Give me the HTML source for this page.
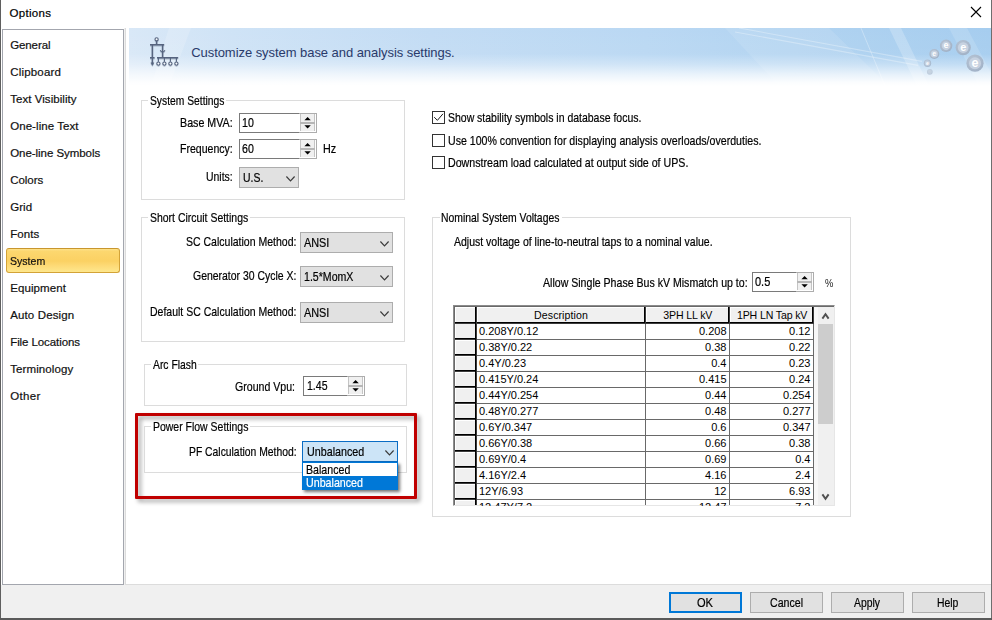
<!DOCTYPE html>
<html><head><meta charset="utf-8"><title>Options</title>
<style>
*{box-sizing:border-box;margin:0;padding:0}
html,body{width:992px;height:620px;overflow:hidden;background:#fff}
body{position:relative;font-family:"Liberation Sans",sans-serif;font-size:12px;color:#000}
.a{position:absolute}
.t{position:absolute;white-space:pre;transform-origin:0 50%;-webkit-text-stroke:0.2px currentColor}
.n{-webkit-text-stroke:0}
.g{position:absolute;border:1px solid #dcdcdc}
.in{position:absolute;background:#fff;border:1px solid #7a7a7a}
.cm{position:absolute;background:#e1e1e1;border:1px solid #adadad}
.bt{position:absolute;top:592px;width:73px;height:21px;background:#e1e1e1;border:1px solid #adadad}
.cb{position:absolute;width:13px;height:13px;border:1px solid #333;background:#fff}
.sp{position:absolute;background:#fff;border:1px solid #adadad;border-left:0}
.sb{position:absolute;left:1px;width:15px;background:#f0f0f0;border-left:1px solid #c4c4c4;border-right:1px solid #c4c4c4}
svg{position:absolute;overflow:visible}
</style></head><body>
<div class="a" style="left:0px;top:0px;width:1px;height:620px;background:#5f5f5f"></div>
<div class="a" style="left:991px;top:0px;width:1px;height:620px;background:#6e6e6e"></div>
<div class="a" style="left:1px;top:585px;width:990px;height:33px;background:#f0f0f0"></div>
<div class="a" style="left:0px;top:618px;width:992px;height:2px;background:#5a5a5a"></div>
<svg style="left:971px;top:7px" width="10" height="10" viewBox="0 0 10 10"><path d="M0 0L10 10M10 0L0 10" stroke="#000" stroke-width="1.1" fill="none"/></svg>
<div class="a" style="left:2px;top:29px;width:122px;height:556px;background:#fff;border:1px solid #a3a6ae"></div>
<div class="a" style="left:124px;top:28px;width:1px;height:557px;background:#f0f0f0"></div>
<div class="a" style="left:125px;top:28px;width:1px;height:557px;background:#dcdcdc"></div>
<div class="a" style="left:125px;top:584px;width:866px;height:1px;background:#dcdcdc"></div>
<div class="a" style="left:6px;top:248px;width:114px;height:25px;border:1px solid #d3a337;border-top-color:#c8962e;border-radius:3px;background:linear-gradient(#fee28a 0,#fcd76f 10%,#fbd163 52%,#fdda76 72%,#fee78d 100%)"></div>
<div class="a" style="left:129px;top:28px;width:862px;height:58px;overflow:hidden;background:linear-gradient(90deg,#d9e8f7 0,#cfe3f6 12%,#c3dcf4 35%,#bad8f3 60%,#add1f0 85%,#a6cdef 100%)">
<svg style="left:0;top:0" width="862" height="58" viewBox="0 0 862 58">
<polygon points="596,0 700,0 760,58 650,58" fill="#fff" opacity=".10"/>
<path d="M610 0L793 33.4M606 4L789 37.4" stroke="#fff" stroke-width="1.1" opacity=".3" fill="none"/>
<polygon points="760,0 772,0 800,58 788,58" fill="#fff" opacity=".22"/>
<path d="M732 0L756 58" stroke="#fff" stroke-width="1" opacity=".3"/>
<polygon points="820,0 838,0 862,45 862,58 850,58" fill="#fff" opacity=".14"/>
<polygon points="40,0 62,0 40,58 22,58" fill="#fff" opacity=".18"/>
</svg>
<div class="a" style="left:0;top:0;width:862px;height:58px;background:linear-gradient(rgba(255,255,255,0) 0,rgba(255,255,255,.04) 45%,rgba(255,255,255,.3) 62%,rgba(255,255,255,.7) 80%,rgba(255,255,255,.95) 94%,#fff 100%)"></div>
<svg style="left:0;top:0" width="862" height="58" viewBox="0 0 862 58" font-family="Liberation Sans, sans-serif" font-weight="bold" fill="#fff" text-anchor="middle">
<defs><radialGradient id="bg" cx=".4" cy=".35" r=".7"><stop offset="0" stop-color="#b9c6d6"/><stop offset=".7" stop-color="#a9b8cb"/><stop offset="1" stop-color="#9fb0c6"/></radialGradient></defs>
<g stroke="none">
<circle cx="846" cy="35.2" r="8.6" fill="url(#bg)" opacity="1"/>
<circle cx="846" cy="35.2" r="6.02" fill="#c9d4e2" opacity="0.90"/>
<circle cx="834.2" cy="19.6" r="7.6" fill="url(#bg)" opacity="1"/>
<circle cx="834.2" cy="19.6" r="5.32" fill="#c9d4e2" opacity="0.90"/>
<circle cx="817.1" cy="17.8" r="6.2" fill="url(#bg)" opacity="1"/>
<circle cx="817.1" cy="17.8" r="4.34" fill="#c9d4e2" opacity="0.90"/>
<circle cx="805.3" cy="26" r="5" fill="url(#bg)" opacity="1"/>
<circle cx="805.3" cy="26" r="3.50" fill="#c9d4e2" opacity="0.90"/>
<circle cx="798.5" cy="35.2" r="3.7" fill="url(#bg)" opacity="0.85"/>
<circle cx="798.5" cy="35.2" r="2.59" fill="#c9d4e2" opacity="0.77"/>
<circle cx="800.8" cy="43.8" r="2.9" fill="url(#bg)" opacity="0.6"/>
<circle cx="800.8" cy="43.8" r="2.03" fill="#c9d4e2" opacity="0.54"/>
</g>
<text x="846" y="38.6" font-size="12.5" stroke="none">e</text>
<text x="834.2" y="22.6" font-size="11" stroke="none">e</text>
<text x="817.1" y="20.2" font-size="9" stroke="none">e</text>
<text x="805.3" y="27.9" font-size="7" stroke="none">e</text>
<text x="798.5" y="36.6" font-size="5" stroke="none">e</text>
</svg>
<svg style="left:20px;top:8px;filter:drop-shadow(0.5px 1px 0.6px rgba(70,85,115,.35))" width="32" height="32" viewBox="149 36 32 32" fill="none" stroke="#56647f" stroke-width="1.5">
<path d="M156.6 41V44.7M150 44.7H164.2M152.4 44.7V63M162.6 44.7V57.7M150 57.7H154.6M157 57.7H178.2"/>
<circle cx="156.6" cy="39.3" r="1.6" fill="#f4f8fc" stroke-width="1.1"/>
<path d="M152.4 65.4L150.9 62.8H153.9Z" fill="#56647f" stroke-width=".5"/>
<path d="M160.2 50.2Q162.6 53.8 165 50.2" stroke-width="1.1"/>
<path d="M158.4 57.7V61.8M164.4 57.7V61.8M170.4 57.7V61.8M176.4 57.7V61.8" stroke-width="1.1"/>
<g stroke-width="1.1" fill="#f4f8fc"><circle cx="158.4" cy="63.6" r="1.6"/><circle cx="164.4" cy="63.6" r="1.6"/><circle cx="170.4" cy="63.6" r="1.6"/><circle cx="176.4" cy="63.6" r="1.6"/></g>
</svg>
</div>

<div class="bt" style="left:669px;border:2px solid #0078d7"></div>
<div class="bt" style="left:750px"></div>
<div class="bt" style="left:831px"></div>
<div class="bt" style="left:912px"></div>
<div class="g" style="left:141px;top:100px;width:264px;height:100px"></div>
<div class="a" style="left:148px;top:100px;width:78px;height:1px;background:#fff"></div>
<div class="in" style="left:239px;top:113px;width:61px;height:20px;border-right:0"></div>
<div class="sp" style="left:299px;top:113px;width:18px;height:20px"><div class="sb" style="top:0px;height:8px"></div><div class="a" style="left:1px;top:8px;width:15px;height:2px;background:#b6b6b6"></div><div class="sb" style="top:10px;height:7px"></div><svg style="left:0;top:0" width="18" height="18" viewBox="0 0 18 18"><path d="M5.4 6.2L8.6 3L11.8 6.2ZM5.4 11.2L8.6 14.4L11.8 11.2Z" fill="#000"/></svg></div>
<div class="in" style="left:239px;top:139px;width:61px;height:20px;border-right:0"></div>
<div class="sp" style="left:299px;top:139px;width:18px;height:20px"><div class="sb" style="top:0px;height:8px"></div><div class="a" style="left:1px;top:8px;width:15px;height:2px;background:#b6b6b6"></div><div class="sb" style="top:10px;height:7px"></div><svg style="left:0;top:0" width="18" height="18" viewBox="0 0 18 18"><path d="M5.4 6.2L8.6 3L11.8 6.2ZM5.4 11.2L8.6 14.4L11.8 11.2Z" fill="#000"/></svg></div>
<div class="cm" style="left:239px;top:167px;width:60px;height:21px;"><svg style="right:3.4px;top:7.6px" width="9" height="6" viewBox="0 0 9 6"><path d="M0.4 0.5L4.5 4.8L8.6 0.5" stroke="#3a3a3a" stroke-width="1.15" fill="none"/></svg></div>
<div class="g" style="left:141px;top:217px;width:264px;height:125px"></div>
<div class="a" style="left:148px;top:217px;width:101.80000000000001px;height:1px;background:#fff"></div>
<div class="cm" style="left:300px;top:232px;width:93px;height:21px;"><svg style="right:3.4px;top:7.6px" width="9" height="6" viewBox="0 0 9 6"><path d="M0.4 0.5L4.5 4.8L8.6 0.5" stroke="#3a3a3a" stroke-width="1.15" fill="none"/></svg></div>
<div class="cm" style="left:300px;top:266px;width:93px;height:21px;"><svg style="right:3.4px;top:7.6px" width="9" height="6" viewBox="0 0 9 6"><path d="M0.4 0.5L4.5 4.8L8.6 0.5" stroke="#3a3a3a" stroke-width="1.15" fill="none"/></svg></div>
<div class="cm" style="left:300px;top:302px;width:93px;height:21px;"><svg style="right:3.4px;top:7.6px" width="9" height="6" viewBox="0 0 9 6"><path d="M0.4 0.5L4.5 4.8L8.6 0.5" stroke="#3a3a3a" stroke-width="1.15" fill="none"/></svg></div>
<div class="g" style="left:144px;top:364px;width:263px;height:42px"></div>
<div class="a" style="left:151px;top:364px;width:47.30000000000001px;height:1px;background:#fff"></div>
<div class="in" style="left:303px;top:376px;width:45px;height:20px;border-right:0"></div>
<div class="sp" style="left:347px;top:376px;width:18px;height:20px"><div class="sb" style="top:0px;height:8px"></div><div class="a" style="left:1px;top:8px;width:15px;height:2px;background:#b6b6b6"></div><div class="sb" style="top:10px;height:7px"></div><svg style="left:0;top:0" width="18" height="18" viewBox="0 0 18 18"><path d="M5.4 6.2L8.6 3L11.8 6.2ZM5.4 11.2L8.6 14.4L11.8 11.2Z" fill="#000"/></svg></div>
<div class="a" style="left:135px;top:413px;width:282px;height:86px;border:3px solid #c00000;border-radius:1px;filter:drop-shadow(3px 3px 2px rgba(0,0,0,.36))"></div>
<div class="g" style="left:144px;top:426px;width:263px;height:47px"></div>
<div class="a" style="left:151px;top:426px;width:99px;height:1px;background:#fff"></div>
<div class="cm" style="left:302px;top:441px;width:96px;height:21px;background:#cce4f7;border-color:#0a6cc4"><svg style="right:3.4px;top:7.6px" width="9" height="6" viewBox="0 0 9 6"><path d="M0.4 0.5L4.5 4.8L8.6 0.5" stroke="#3a3a3a" stroke-width="1.15" fill="none"/></svg></div>
<div class="a" style="left:302px;top:462px;width:96px;height:28px;background:#fff;border:1px solid #0078d7;box-shadow:2px 2px 3px rgba(0,0,0,.55)"><div class="a" style="left:0;top:13px;width:94px;height:13px;background:#0078d7"></div></div>
<div class="cb" style="left:432px;top:111px"><svg style="left:1px;top:1px" width="9" height="9" viewBox="0 0 9 9"><path d="M0.2 4.2L3.4 7.3L9 0.8" stroke="#1a1a1a" stroke-width="1" fill="none"/></svg></div>
<div class="cb" style="left:432px;top:134px"></div>
<div class="cb" style="left:432px;top:156px"></div>
<div class="g" style="left:432px;top:217px;width:419px;height:300px"></div>
<div class="a" style="left:439.5px;top:217px;width:122.0px;height:1px;background:#fff"></div>
<div class="in" style="left:752px;top:272px;width:45px;height:20px;border-right:0"></div>
<div class="sp" style="left:796px;top:272px;width:18px;height:20px"><div class="sb" style="top:0px;height:8px"></div><div class="a" style="left:1px;top:8px;width:15px;height:2px;background:#b6b6b6"></div><div class="sb" style="top:10px;height:7px"></div><svg style="left:0;top:0" width="18" height="18" viewBox="0 0 18 18"><path d="M5.4 6.2L8.6 3L11.8 6.2ZM5.4 11.2L8.6 14.4L11.8 11.2Z" fill="#000"/></svg></div>
<div class="a" style="left:453px;top:305px;width:382px;height:201px;background:#fff;overflow:hidden;border-top:1px solid #8c8c8c;border-left:1px solid #8c8c8c;border-right:1px solid #e6e6e6;border-bottom:1px solid #e6e6e6"><div class="a" style="left:0;top:0;width:381px;height:1px;background:#696969"></div><div class="a" style="left:0;top:0;width:1px;height:200px;background:#696969"></div><div class="a" style="left:2px;top:2px;width:357px;height:14px;background:#f0f0f0"></div><div class="a" style="left:2px;top:2px;width:19px;height:198px;background:#f0f0f0"></div><div class="a" style="left:1px;top:16px;width:359px;height:1px;background:#000"></div><div class="a" style="left:1px;top:17px;width:359px;height:1px;background:#3c3c3c"></div><div class="a" style="left:21px;top:1px;width:1px;height:16px;background:#000"></div><div class="a" style="left:22px;top:1px;width:1px;height:16px;background:#3c3c3c"></div><div class="a" style="left:23px;top:1px;width:1px;height:15px;background:#fff"></div><div class="a" style="left:190px;top:1px;width:1px;height:16px;background:#000"></div><div class="a" style="left:191px;top:1px;width:1px;height:16px;background:#3c3c3c"></div><div class="a" style="left:192px;top:1px;width:1px;height:15px;background:#fff"></div><div class="a" style="left:274px;top:1px;width:1px;height:16px;background:#000"></div><div class="a" style="left:275px;top:1px;width:1px;height:16px;background:#3c3c3c"></div><div class="a" style="left:276px;top:1px;width:1px;height:15px;background:#fff"></div><div class="a" style="left:358px;top:1px;width:1px;height:16px;background:#000"></div><div class="a" style="left:359px;top:1px;width:1px;height:16px;background:#3c3c3c"></div><div class="a" style="left:360px;top:1px;width:1px;height:15px;background:#fff"></div><div class="a" style="left:21px;top:16px;width:1px;height:184px;background:#000"></div><div class="a" style="left:22px;top:16px;width:1px;height:184px;background:#3c3c3c"></div><div class="a" style="left:23px;top:33px;width:337px;height:1px;background:#696969"></div><div class="a" style="left:1px;top:32px;width:20px;height:1px;background:#000"></div><div class="a" style="left:1px;top:33px;width:20px;height:1px;background:#3c3c3c"></div><div class="a" style="left:1px;top:34px;width:20px;height:1px;background:#fff"></div><div class="a" style="left:23px;top:49px;width:337px;height:1px;background:#696969"></div><div class="a" style="left:1px;top:48px;width:20px;height:1px;background:#000"></div><div class="a" style="left:1px;top:49px;width:20px;height:1px;background:#3c3c3c"></div><div class="a" style="left:1px;top:50px;width:20px;height:1px;background:#fff"></div><div class="a" style="left:23px;top:65px;width:337px;height:1px;background:#696969"></div><div class="a" style="left:1px;top:64px;width:20px;height:1px;background:#000"></div><div class="a" style="left:1px;top:65px;width:20px;height:1px;background:#3c3c3c"></div><div class="a" style="left:1px;top:66px;width:20px;height:1px;background:#fff"></div><div class="a" style="left:23px;top:81px;width:337px;height:1px;background:#696969"></div><div class="a" style="left:1px;top:80px;width:20px;height:1px;background:#000"></div><div class="a" style="left:1px;top:81px;width:20px;height:1px;background:#3c3c3c"></div><div class="a" style="left:1px;top:82px;width:20px;height:1px;background:#fff"></div><div class="a" style="left:23px;top:97px;width:337px;height:1px;background:#696969"></div><div class="a" style="left:1px;top:96px;width:20px;height:1px;background:#000"></div><div class="a" style="left:1px;top:97px;width:20px;height:1px;background:#3c3c3c"></div><div class="a" style="left:1px;top:98px;width:20px;height:1px;background:#fff"></div><div class="a" style="left:23px;top:113px;width:337px;height:1px;background:#696969"></div><div class="a" style="left:1px;top:112px;width:20px;height:1px;background:#000"></div><div class="a" style="left:1px;top:113px;width:20px;height:1px;background:#3c3c3c"></div><div class="a" style="left:1px;top:114px;width:20px;height:1px;background:#fff"></div><div class="a" style="left:23px;top:129px;width:337px;height:1px;background:#696969"></div><div class="a" style="left:1px;top:128px;width:20px;height:1px;background:#000"></div><div class="a" style="left:1px;top:129px;width:20px;height:1px;background:#3c3c3c"></div><div class="a" style="left:1px;top:130px;width:20px;height:1px;background:#fff"></div><div class="a" style="left:23px;top:145px;width:337px;height:1px;background:#696969"></div><div class="a" style="left:1px;top:144px;width:20px;height:1px;background:#000"></div><div class="a" style="left:1px;top:145px;width:20px;height:1px;background:#3c3c3c"></div><div class="a" style="left:1px;top:146px;width:20px;height:1px;background:#fff"></div><div class="a" style="left:23px;top:161px;width:337px;height:1px;background:#696969"></div><div class="a" style="left:1px;top:160px;width:20px;height:1px;background:#000"></div><div class="a" style="left:1px;top:161px;width:20px;height:1px;background:#3c3c3c"></div><div class="a" style="left:1px;top:162px;width:20px;height:1px;background:#fff"></div><div class="a" style="left:23px;top:177px;width:337px;height:1px;background:#696969"></div><div class="a" style="left:1px;top:176px;width:20px;height:1px;background:#000"></div><div class="a" style="left:1px;top:177px;width:20px;height:1px;background:#3c3c3c"></div><div class="a" style="left:1px;top:178px;width:20px;height:1px;background:#fff"></div><div class="a" style="left:23px;top:193px;width:337px;height:1px;background:#696969"></div><div class="a" style="left:1px;top:192px;width:20px;height:1px;background:#000"></div><div class="a" style="left:1px;top:193px;width:20px;height:1px;background:#3c3c3c"></div><div class="a" style="left:1px;top:194px;width:20px;height:1px;background:#fff"></div><div class="a" style="left:191px;top:18px;width:1px;height:182px;background:#696969"></div><div class="a" style="left:275px;top:18px;width:1px;height:182px;background:#696969"></div><div class="a" style="left:359px;top:18px;width:1px;height:182px;background:#696969"></div><div class="a" style="left:360px;top:1px;width:4px;height:199px;background:#f7f7f7"></div><div class="a" style="left:364px;top:1px;width:16px;height:199px;background:#f0f0f0"></div><div class="a" style="left:364px;top:18px;width:15px;height:100px;background:#cdcdcd"></div><svg style="left:366px;top:6px" width="11" height="8" viewBox="820 312 11 8"><path d="M822.4 318.6L825.5 314.2L828.6 318.6" stroke="#505050" stroke-width="1.9" fill="none"/></svg><svg style="left:366px;top:187px" width="11" height="8" viewBox="820 493 11 8"><path d="M822.4 494.4L825.5 498.8L828.6 494.4" stroke="#505050" stroke-width="1.9" fill="none"/></svg></div>
<div class="t" style="left:9.4px;top:6.32px;font-size:11.5px;line-height:14px;letter-spacing:0.323px;">Options</div>
<div class="t" style="left:10.2px;top:37.62px;font-size:11.5px;line-height:14px;letter-spacing:-0.103px;color:#111;">General</div>
<div class="t" style="left:10.2px;top:64.62px;font-size:11.5px;line-height:14px;letter-spacing:0.185px;color:#111;">Clipboard</div>
<div class="t" style="left:10.2px;top:91.62px;font-size:11.5px;line-height:14px;letter-spacing:0.052px;color:#111;">Text Visibility</div>
<div class="t" style="left:10.2px;top:118.62px;font-size:11.5px;line-height:14px;letter-spacing:0.066px;color:#111;">One-line Text</div>
<div class="t" style="left:10.2px;top:145.62px;font-size:11.5px;line-height:14px;letter-spacing:-0.048px;color:#111;">One-line Symbols</div>
<div class="t" style="left:10.2px;top:172.62px;font-size:11.5px;line-height:14px;letter-spacing:-0.039px;color:#111;">Colors</div>
<div class="t" style="left:10.2px;top:199.62px;font-size:11.5px;line-height:14px;letter-spacing:0.041px;color:#111;">Grid</div>
<div class="t" style="left:10.2px;top:226.62px;font-size:11.5px;line-height:14px;letter-spacing:0.067px;color:#111;">Fonts</div>
<div class="t" style="left:10.2px;top:253.62px;font-size:11.5px;line-height:14px;transform:scaleX(0.9180);color:#111;">System</div>
<div class="t" style="left:10.2px;top:280.62px;font-size:11.5px;line-height:14px;letter-spacing:0.102px;color:#111;">Equipment</div>
<div class="t" style="left:10.2px;top:307.62px;font-size:11.5px;line-height:14px;letter-spacing:0.131px;color:#111;">Auto Design</div>
<div class="t" style="left:10.2px;top:334.62px;font-size:11.5px;line-height:14px;letter-spacing:-0.083px;color:#111;">File Locations</div>
<div class="t" style="left:10.2px;top:361.62px;font-size:11.5px;line-height:14px;letter-spacing:0.100px;color:#111;">Terminology</div>
<div class="t" style="left:10.2px;top:388.62px;font-size:11.5px;line-height:14px;letter-spacing:0.327px;color:#111;">Other</div>
<div class="t" style="left:191.2px;top:44.90px;font-size:13px;line-height:16px;letter-spacing:-0.055px;color:#2a3a6a;-webkit-text-stroke:0;">Customize system base and analysis settings.</div>
<div class="t" style="left:697.3px;top:594.67px;font-size:12.5px;line-height:16px;transform:scaleX(0.8858);">OK</div>
<div class="t" style="left:769.6px;top:594.67px;font-size:12.5px;line-height:16px;transform:scaleX(0.8504);">Cancel</div>
<div class="t" style="left:853.9px;top:594.67px;font-size:12.5px;line-height:16px;transform:scaleX(0.8312);">Apply</div>
<div class="t" style="left:937.1px;top:594.67px;font-size:12.5px;line-height:16px;transform:scaleX(0.8321);">Help</div>
<div class="t" style="left:149.9px;top:94.01px;font-size:12.1px;line-height:15px;transform:scaleX(0.8513);">System Settings</div>
<div class="t" style="left:180.4px;top:116.01px;font-size:12.1px;line-height:15px;transform:scaleX(0.8841);">Base MVA:</div>
<div class="t" style="left:242.3px;top:116.01px;font-size:12.1px;line-height:15px;transform:scaleX(0.8771);">10</div>
<div class="t" style="left:180.4px;top:141.61px;font-size:12.1px;line-height:15px;transform:scaleX(0.8711);">Frequency:</div>
<div class="t" style="left:242.3px;top:141.61px;font-size:12.1px;line-height:15px;transform:scaleX(0.8771);">60</div>
<div class="t" style="left:322.9px;top:141.61px;font-size:12.1px;line-height:15px;transform:scaleX(0.8930);">Hz</div>
<div class="t" style="left:206.4px;top:169.81px;font-size:12.1px;line-height:15px;transform:scaleX(0.8635);">Units:</div>
<div class="t" style="left:243.3px;top:171.21px;font-size:12.1px;line-height:15px;transform:scaleX(0.8627);">U.S.</div>
<div class="t" style="left:149.9px;top:211.01px;font-size:12.1px;line-height:15px;transform:scaleX(0.8645);">Short Circuit Settings</div>
<div class="t" style="left:185.9px;top:234.81px;font-size:12.1px;line-height:15px;transform:scaleX(0.8689);">SC Calculation Method:</div>
<div class="t" style="left:304.4px;top:236.21px;font-size:12.1px;line-height:15px;transform:scaleX(0.8996);">ANSI</div>
<div class="t" style="left:192.9px;top:268.81px;font-size:12.1px;line-height:15px;transform:scaleX(0.8641);">Generator 30 Cycle X:</div>
<div class="t" style="left:304.4px;top:270.21px;font-size:12.1px;line-height:15px;transform:scaleX(0.8748);">1.5*MomX</div>
<div class="t" style="left:149.9px;top:304.81px;font-size:12.1px;line-height:15px;transform:scaleX(0.8676);">Default SC Calculation Method:</div>
<div class="t" style="left:304.4px;top:306.21px;font-size:12.1px;line-height:15px;transform:scaleX(0.8996);">ANSI</div>
<div class="t" style="left:152.9px;top:358.01px;font-size:12.1px;line-height:15px;transform:scaleX(0.8556);">Arc Flash</div>
<div class="t" style="left:234.7px;top:379.91px;font-size:12.1px;line-height:15px;transform:scaleX(0.8749);">Ground Vpu:</div>
<div class="t" style="left:306.8px;top:379.11px;font-size:12.1px;line-height:15px;transform:scaleX(0.8706);">1.45</div>
<div class="t" style="left:152.9px;top:420.01px;font-size:12.1px;line-height:15px;transform:scaleX(0.8654);">Power Flow Settings</div>
<div class="t" style="left:189.3px;top:445.01px;font-size:12.1px;line-height:15px;transform:scaleX(0.8560);">PF Calculation Method:</div>
<div class="t" style="left:306.5px;top:445.11px;font-size:12.1px;line-height:15px;transform:scaleX(0.8875);">Unbalanced</div>
<div class="t" style="left:305.5px;top:462.71px;font-size:12.1px;line-height:15px;transform:scaleX(0.8783);">Balanced</div>
<div class="t" style="left:305.5px;top:476.11px;font-size:12.1px;line-height:15px;transform:scaleX(0.8829);color:#fff;">Unbalanced</div>
<div class="t" style="left:448.4px;top:111.31px;font-size:12.1px;line-height:15px;transform:scaleX(0.8665);">Show stability symbols in database focus.</div>
<div class="t" style="left:448.4px;top:134.31px;font-size:12.1px;line-height:15px;transform:scaleX(0.8763);">Use 100% convention for displaying analysis overloads/overduties.</div>
<div class="t" style="left:448.4px;top:156.31px;font-size:12.1px;line-height:15px;transform:scaleX(0.8808);">Downstream load calculated at output side of UPS.</div>
<div class="t" style="left:441.4px;top:211.01px;font-size:12.1px;line-height:15px;transform:scaleX(0.8592);">Nominal System Voltages</div>
<div class="t" style="left:453.6px;top:235.31px;font-size:12.1px;line-height:15px;transform:scaleX(0.8683);">Adjust voltage of line-to-neutral taps to a nominal value.</div>
<div class="t" style="left:542.9px;top:276.11px;font-size:12.1px;line-height:15px;transform:scaleX(0.8747);">Allow Single Phase Bus kV Mismatch up to:</div>
<div class="t" style="left:755.0px;top:275.31px;font-size:12.1px;line-height:15px;transform:scaleX(0.9100);">0.5</div>
<div class="t" style="left:825.2px;top:277.06px;font-size:10.5px;line-height:13px;transform:scaleX(0.8883);color:#222;-webkit-text-stroke:0;">%</div>
<div class="t" style="left:534.1px;top:309.13px;font-size:10.6px;line-height:13px;letter-spacing:0.073px;-webkit-text-stroke:0;">Description</div>
<div class="t" style="left:663.2px;top:309.13px;font-size:10.6px;line-height:13px;letter-spacing:-0.128px;-webkit-text-stroke:0;">3PH LL kV</div>
<div class="t" style="left:736.9px;top:309.13px;font-size:10.6px;line-height:13px;letter-spacing:-0.141px;-webkit-text-stroke:0;">1PH LN Tap kV</div>
<div class="t n" style="left:479.00px;top:324.19px;font-size:11px;line-height:14px;">0.208Y/0.12</div>
<div class="t n" style="left:698.97px;top:324.19px;font-size:11px;line-height:14px;">0.208</div>
<div class="t n" style="left:789.08px;top:324.19px;font-size:11px;line-height:14px;">0.12</div>
<div class="t n" style="left:479.00px;top:340.19px;font-size:11px;line-height:14px;">0.38Y/0.22</div>
<div class="t n" style="left:705.08px;top:340.19px;font-size:11px;line-height:14px;">0.38</div>
<div class="t n" style="left:789.08px;top:340.19px;font-size:11px;line-height:14px;">0.22</div>
<div class="t n" style="left:479.00px;top:356.19px;font-size:11px;line-height:14px;">0.4Y/0.23</div>
<div class="t n" style="left:711.20px;top:356.19px;font-size:11px;line-height:14px;">0.4</div>
<div class="t n" style="left:789.08px;top:356.19px;font-size:11px;line-height:14px;">0.23</div>
<div class="t n" style="left:479.00px;top:372.19px;font-size:11px;line-height:14px;">0.415Y/0.24</div>
<div class="t n" style="left:698.97px;top:372.19px;font-size:11px;line-height:14px;">0.415</div>
<div class="t n" style="left:789.08px;top:372.19px;font-size:11px;line-height:14px;">0.24</div>
<div class="t n" style="left:479.00px;top:388.19px;font-size:11px;line-height:14px;">0.44Y/0.254</div>
<div class="t n" style="left:705.08px;top:388.19px;font-size:11px;line-height:14px;">0.44</div>
<div class="t n" style="left:782.97px;top:388.19px;font-size:11px;line-height:14px;">0.254</div>
<div class="t n" style="left:479.00px;top:404.19px;font-size:11px;line-height:14px;">0.48Y/0.277</div>
<div class="t n" style="left:705.08px;top:404.19px;font-size:11px;line-height:14px;">0.48</div>
<div class="t n" style="left:782.97px;top:404.19px;font-size:11px;line-height:14px;">0.277</div>
<div class="t n" style="left:479.00px;top:420.19px;font-size:11px;line-height:14px;">0.6Y/0.347</div>
<div class="t n" style="left:711.20px;top:420.19px;font-size:11px;line-height:14px;">0.6</div>
<div class="t n" style="left:782.97px;top:420.19px;font-size:11px;line-height:14px;">0.347</div>
<div class="t n" style="left:479.00px;top:436.19px;font-size:11px;line-height:14px;">0.66Y/0.38</div>
<div class="t n" style="left:705.08px;top:436.19px;font-size:11px;line-height:14px;">0.66</div>
<div class="t n" style="left:789.08px;top:436.19px;font-size:11px;line-height:14px;">0.38</div>
<div class="t n" style="left:479.00px;top:452.19px;font-size:11px;line-height:14px;">0.69Y/0.4</div>
<div class="t n" style="left:705.08px;top:452.19px;font-size:11px;line-height:14px;">0.69</div>
<div class="t n" style="left:795.20px;top:452.19px;font-size:11px;line-height:14px;">0.4</div>
<div class="t n" style="left:479.00px;top:468.19px;font-size:11px;line-height:14px;">4.16Y/2.4</div>
<div class="t n" style="left:705.08px;top:468.19px;font-size:11px;line-height:14px;">4.16</div>
<div class="t n" style="left:795.20px;top:468.19px;font-size:11px;line-height:14px;">2.4</div>
<div class="t n" style="left:479.00px;top:484.19px;font-size:11px;line-height:14px;">12Y/6.93</div>
<div class="t n" style="left:714.25px;top:484.19px;font-size:11px;line-height:14px;">12</div>
<div class="t n" style="left:789.08px;top:484.19px;font-size:11px;line-height:14px;">6.93</div>
<div class="t n" style="left:479.00px;top:500.19px;font-size:11px;line-height:14px;clip-path:inset(0 0 8.2px 0);">12.47Y/7.2</div>
<div class="t n" style="left:698.97px;top:500.19px;font-size:11px;line-height:14px;clip-path:inset(0 0 8.2px 0);">12.47</div>
<div class="t n" style="left:795.20px;top:500.19px;font-size:11px;line-height:14px;clip-path:inset(0 0 8.2px 0);">7.2</div>
</body></html>
